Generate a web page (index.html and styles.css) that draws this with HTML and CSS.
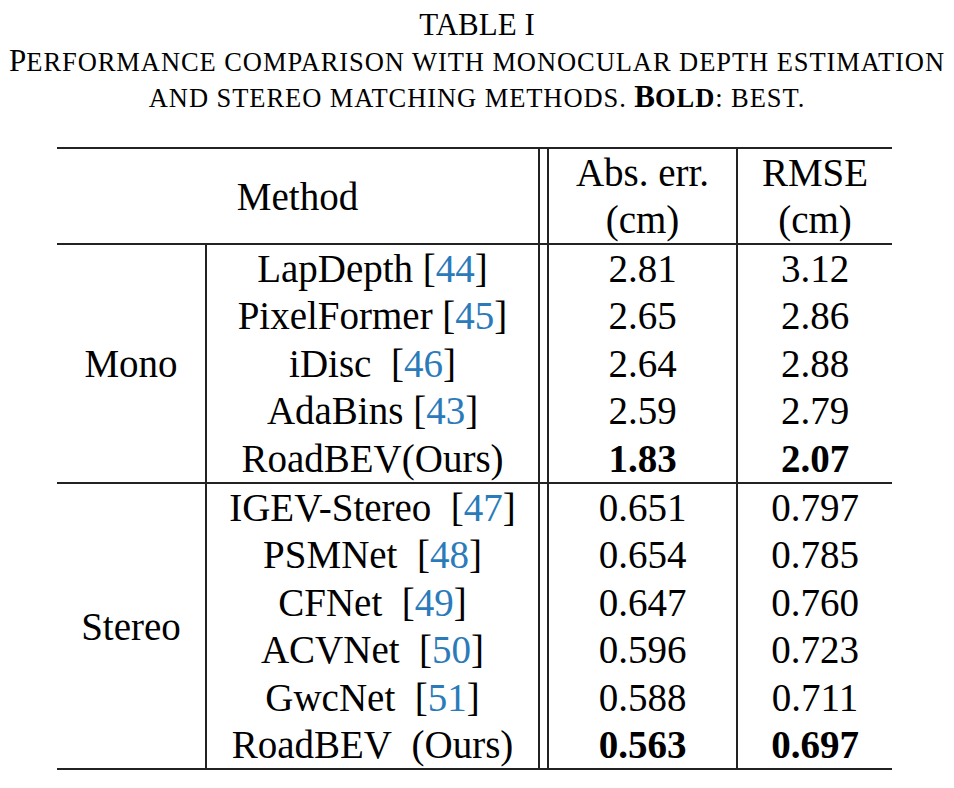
FILE: index.html
```html
<!DOCTYPE html>
<html lang="en">
<head>
<meta charset="utf-8">
<title>Table I</title>
<link rel="stylesheet" href="styles.css">
</head>
<body>
<div class="caption">
  <div class="tnum">TABLE I</div>
  <div>P<span class="sc">ERFORMANCE COMPARISON WITH MONOCULAR DEPTH ESTIMATION</span></div>
  <div><span class="sc">AND STEREO MATCHING METHODS. </span><b>B<span class="sc">OLD</span></b><span class="sc">: BEST.</span></div>
</div>
<table class="cmp">
  <colgroup>
    <col class="c-group">
    <col class="c-method">
    <col class="c-dbl">
    <col class="c-abs">
    <col class="c-rmse">
  </colgroup>
  <thead>
    <tr class="hdr">
      <th colspan="2">Method</th>
      <td class="dbl"></td>
      <th class="abs">Abs. err.<br>(cm)</th>
      <th>RMSE<br>(cm)</th>
    </tr>
  </thead>
  <tbody>
    <tr>
      <td class="grp" rowspan="5">Mono</td>
      <td>LapDepth [<a class="ref">44</a>]</td><td class="dbl"></td><td class="abs">2.81</td><td>3.12</td>
    </tr>
    <tr><td>PixelFormer [<a class="ref">45</a>]</td><td class="dbl"></td><td class="abs">2.65</td><td>2.86</td></tr>
    <tr><td>iDisc&nbsp; [<a class="ref">46</a>]</td><td class="dbl"></td><td class="abs">2.64</td><td>2.88</td></tr>
    <tr><td>AdaBins [<a class="ref">43</a>]</td><td class="dbl"></td><td class="abs">2.59</td><td>2.79</td></tr>
    <tr><td>RoadBEV(Ours)</td><td class="dbl"></td><td class="abs"><b>1.83</b></td><td><b>2.07</b></td></tr>
  </tbody>
  <tbody class="grp-start">
    <tr>
      <td class="grp" rowspan="6">Stereo</td>
      <td>IGEV-Stereo&nbsp; [<a class="ref">47</a>]</td><td class="dbl"></td><td class="abs">0.651</td><td>0.797</td>
    </tr>
    <tr><td>PSMNet&nbsp; [<a class="ref">48</a>]</td><td class="dbl"></td><td class="abs">0.654</td><td>0.785</td></tr>
    <tr><td>CFNet&nbsp; [<a class="ref">49</a>]</td><td class="dbl"></td><td class="abs">0.647</td><td>0.760</td></tr>
    <tr><td>ACVNet&nbsp; [<a class="ref">50</a>]</td><td class="dbl"></td><td class="abs">0.596</td><td>0.723</td></tr>
    <tr><td>GwcNet&nbsp; [<a class="ref">51</a>]</td><td class="dbl"></td><td class="abs">0.588</td><td>0.711</td></tr>
    <tr><td>RoadBEV&nbsp; (Ours)</td><td class="dbl"></td><td class="abs"><b>0.563</b></td><td><b>0.697</b></td></tr>
  </tbody>
</table>
</body>
</html>
```
FILE: styles.css
```css
html, body {
  margin: 0;
  padding: 0;
  background: #fff;
}

body {
  font-family: "Liberation Serif", "Times New Roman", serif;
  color: #000;
}

.caption {
  text-align: center;
  font-size: 31px;
  line-height: 36px;
  padding-top: 7px;
}

.sc {
  font-size: 26.5px;
  letter-spacing: 0.93px;
  line-height: 20px;
}

.cmp {
  border-collapse: collapse;
  table-layout: fixed;
  width: 835px;
  margin: 32px 0 0 57px;
  font-size: 39px;
  border-top: 2px solid #222;
  border-bottom: 2px solid #222;
}

.c-group { width: 149px; }
.c-method { width: 333px; }
.c-dbl { width: 9px; }
.c-abs { width: 189px; }
.c-rmse { width: 155px; }

.cmp th,
.cmp td {
  padding: 0;
  text-align: center;
  vertical-align: middle;
  font-weight: normal;
  line-height: 47.4px;
  white-space: nowrap;
}

.cmp b {
  font-weight: bold;
}

.hdr th,
.hdr td {
  line-height: 47px;
  border-bottom: 2px solid #222;
}

.grp-start tr:first-child td {
  border-top: 2px solid #222;
}

.cmp .grp {
  border-right: 2px solid #222;
}

.cmp .dbl {
  border-left: 2px solid #222;
  border-right: 2px solid #222;
}

.cmp .abs {
  border-right: 2px solid #222;
}

.ref {
  color: #2b7bba;
  text-decoration: none;
}
```
